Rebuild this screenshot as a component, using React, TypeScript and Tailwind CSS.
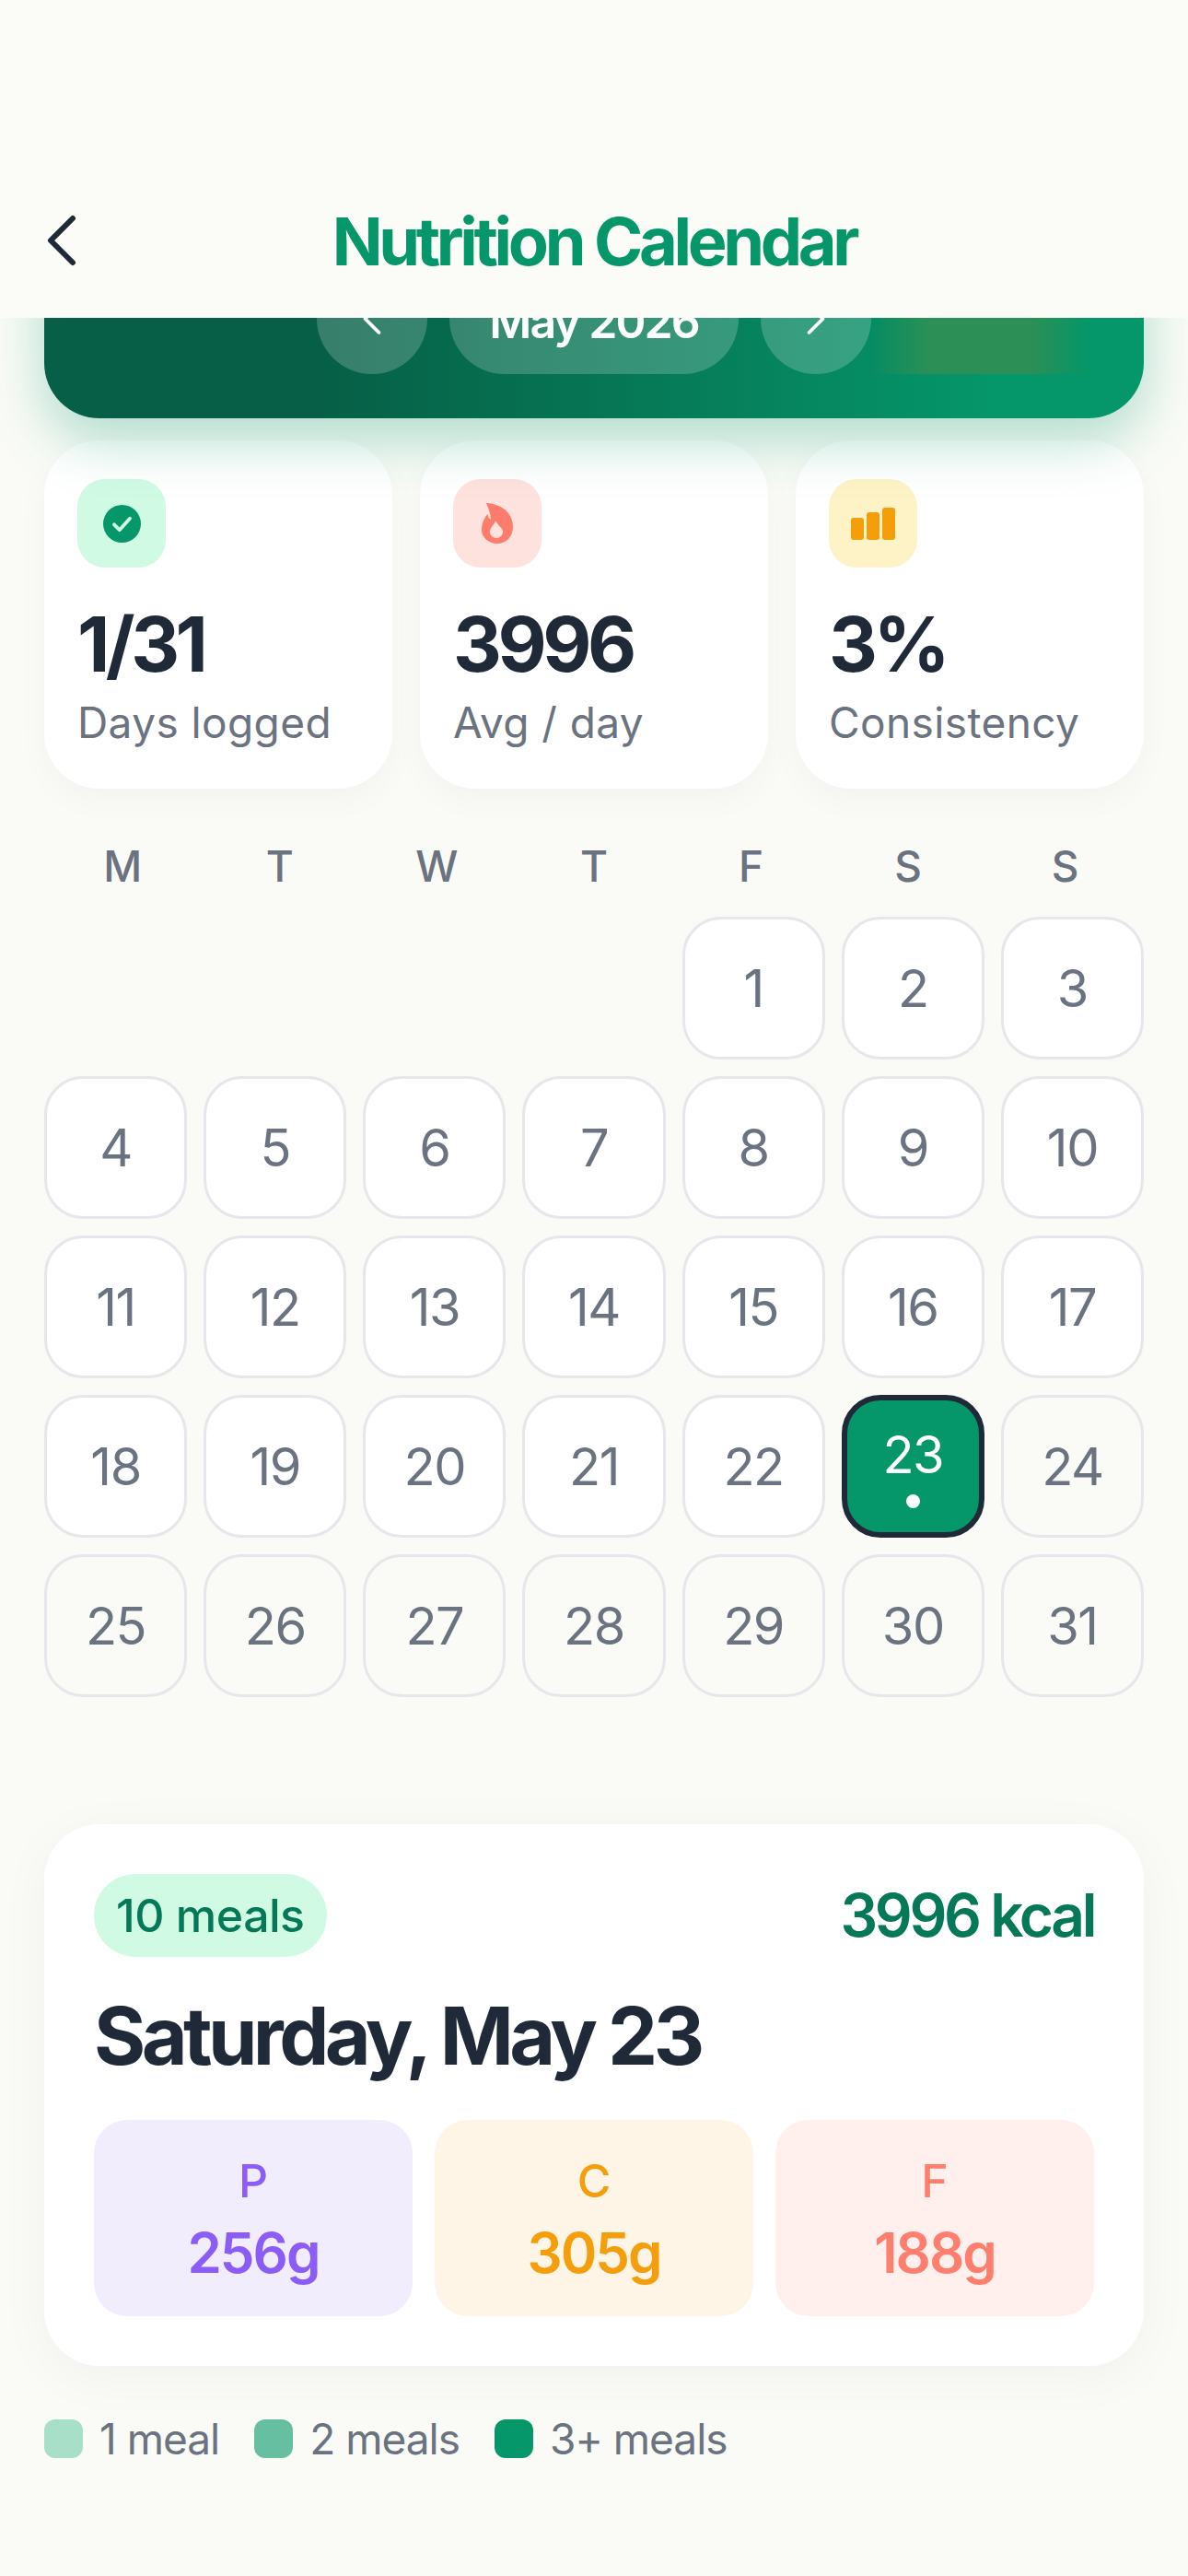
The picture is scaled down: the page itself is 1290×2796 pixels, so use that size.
import { ChevronLeft, ChevronRight } from "lucide-react";

const weekdays = ["M", "T", "W", "T", "F", "S", "S"];
const daysInMonth = Array.from({ length: 31 }, (_, i) => i + 1);
const selectedDay = 23;

const stats = [
  { value: "1/31", label: "Days logged", icon: "check", box: "bg-[#d1fae5]" },
  { value: "3996", label: "Avg / day", icon: "flame", box: "bg-[#fee2de]" },
  { value: "3%", label: "Consistency", icon: "bars", box: "bg-[#fef3c7]" },
];

const macros = [
  { letter: "P", amount: "256g", box: "bg-[#f1edfd]", text: "text-[#8b5cf6]" },
  { letter: "C", amount: "305g", box: "bg-[#fef5e7]", text: "text-[#f59e0b]" },
  { letter: "F", amount: "188g", box: "bg-[#fff0ee]", text: "text-[#ff7f6e]" },
];

const legend = [
  { label: "1 meal", swatch: "bg-[#a7dfc9]" },
  { label: "2 meals", swatch: "bg-[#66bfa0]" },
  { label: "3+ meals", swatch: "bg-[#059669]" },
];

function StatIcon({ name }: { name: string }) {
  if (name === "check") {
    return (
      <svg width="41" height="41" viewBox="0 0 24 24">
        <circle cx="12" cy="12" r="12" fill="#059669" />
        <path d="M7 12.5l3.4 3.4L17 8.6" fill="none" stroke="#d1fae5" strokeWidth="2.2" strokeLinecap="round" strokeLinejoin="round" />
      </svg>
    );
  }
  if (name === "flame") {
    return (
      <svg width="34" height="44" viewBox="0 0 34 44">
        <path
          fillRule="evenodd"
          d="M5 0C14 0 34 6 34 26C34 37 26 44 17 44C7 44 0 37 0 29C0 22 3 16 6.5 12C7 15 8 17 10 18C10 12 7 5 5 0ZM15 19C14 24 9 26 9 31C9 35 12 38 16 38C20 38 23 35 23 31C23 27 18 25 15 19Z"
          fill="#ff7b6b"
        />
      </svg>
    );
  }
  return (
    <div className="flex items-end gap-[3px]">
      <div className="w-[14px] h-[24px] rounded-[3px] bg-[#f59e0b]" />
      <div className="w-[14px] h-[30px] rounded-[3px] bg-[#f59e0b]" />
      <div className="w-[14px] h-[35px] rounded-[3px] bg-[#f59e0b]" />
    </div>
  );
}

function DayCell({ day }: { day: number }) {
  if (day === selectedDay) {
    return (
      <div className="h-[155px] rounded-[42px] border-[6px] border-[#1f2937] bg-[#059669] flex flex-col items-center justify-center text-white text-[56px] leading-[64px] tracking-[-1.5px]">
        <span>{day}</span>
        <div className="w-[15px] h-[15px] rounded-full bg-white mt-[11px]" />
      </div>
    );
  }

  return (
    <div
      className={`h-[155px] rounded-[42px] border-[3px] border-[#e5e7eb] flex items-center justify-center text-[#6b7280] text-[56px] tracking-[-1.5px] ${
        day < selectedDay ? "bg-white" : "bg-[#fafbf7]"
      }`}
    >
      {day}
    </div>
  );
}

export default function App() {
  return (
    <div className="w-[1290px] h-[2796px] overflow-hidden bg-[#fafbf7] font-['Inter',sans-serif]">
      {/* Header sits over the scrolled content */}
      <header className="relative z-20 h-[345px] bg-[#fbfcf8] px-[48px] pt-[215px]">
        <div className="relative flex items-center justify-center h-[90px]">
          <ChevronLeft className="absolute left-[-29px] top-[-2px] text-[#1f2937]" size={96} strokeWidth={1.5} />
          <h1 className="mt-[4px] text-[72px] font-bold tracking-[-4.3px] text-[#059669]">Nutrition Calendar</h1>
        </div>
      </header>

      <main className="px-[48px]">
        {/* Month card, mostly scrolled under the header */}
        <section className="relative z-10 h-[400px] -mt-[291px] rounded-[60px] bg-gradient-to-r from-[#065f46] from-25% to-[#059669] to-86% shadow-[0_24px_60px_rgba(5,150,105,0.3)] flex items-end justify-center gap-[24px] pb-[48px] text-white">
          <div className="w-[120px] h-[120px] rounded-full bg-white/20 flex items-center justify-center">
            <ChevronLeft size={60} strokeWidth={1.5} />
          </div>
          <div className="w-[314px] h-[120px] pt-[6px] rounded-[60px] bg-white/20 flex items-center justify-center text-[50px] font-semibold tracking-[-2px]">
            May 2026
          </div>
          <div className="w-[120px] h-[120px] rounded-full bg-white/20 flex items-center justify-center">
            <ChevronRight size={60} strokeWidth={1.5} />
          </div>
          <div className="absolute right-[60px] bottom-[48px] w-[236px] h-[120px] bg-[linear-gradient(90deg,#2b8f5600,#2b8f56_27%,#2b8f56_74%,#2b8f5600)]" />
        </section>

        <section className="grid grid-cols-3 gap-[30px] mt-[24px]">
          {stats.map((stat) => (
            <div key={stat.label} className="h-[378px] rounded-[60px] bg-white px-[36px] pt-[42px] shadow-[0_12px_36px_rgba(0,0,0,0.03)]">
              <div className={`w-[96px] h-[96px] rounded-[30px] flex items-center justify-center ${stat.box}`}>
                <StatIcon name={stat.icon} />
              </div>
              <div className="mt-[36px] text-[82px] leading-[96px] font-bold tracking-[-4.5px] text-[#1f2937]">{stat.value}</div>
              <div className="mt-[6px] text-[46px] leading-[60px] tracking-[0.4px] text-[#6b7280]">{stat.label}</div>
            </div>
          ))}
        </section>

        <div className="grid grid-cols-7 mt-[50px] h-[60px] items-center text-center text-[#6b7280] text-[46px] font-medium">
          {weekdays.map((d, i) => (
            <span key={i}>{d}</span>
          ))}
        </div>

        <div className="grid grid-cols-7 gap-[18px] mt-[29px]">
          <div className="col-span-4" />
          {daysInMonth.map((day) => (
            <DayCell key={day} day={day} />
          ))}
        </div>

        <section className="mt-[138px] h-[588px] rounded-[60px] bg-white p-[54px] shadow-[0_12px_60px_rgba(0,0,0,0.04)]">
          <div className="flex items-center justify-between h-[90px]">
            <span className="h-[90px] px-[24px] rounded-full bg-[#d1fae5] flex items-center text-[50px] font-medium tracking-[-0.5px] text-[#047857]">
              10 meals
            </span>
            <span className="text-[64px] leading-[90px] font-semibold tracking-[-3.4px] text-[#047857]">3996 kcal</span>
          </div>
          <h2 className="mt-[32px] text-[86px] leading-[108px] font-bold tracking-[-4.6px] text-[#1f2937]">Saturday, May 23</h2>
          <div className="grid grid-cols-3 gap-[24px] mt-[37px]">
            {macros.map((m) => (
              <div key={m.letter} className={`h-[213px] pt-[8px] rounded-[36px] flex flex-col items-center justify-center ${m.box} ${m.text}`}>
                <span className="text-[50px] leading-[66px] font-medium">{m.letter}</span>
                <span className="text-[60px] leading-[90px] font-semibold tracking-[-2px]">{m.amount}</span>
              </div>
            ))}
          </div>
        </section>

        <div className="flex items-center gap-[38px] mt-[55px]">
          {legend.map((item) => (
            <div key={item.label} className="flex items-center gap-[18px]">
              <div className={`w-[42px] h-[42px] rounded-[12px] ${item.swatch}`} />
              <span className="text-[46px] leading-[48px] tracking-[-1px] text-[#6b7280]">{item.label}</span>
            </div>
          ))}
        </div>
      </main>
    </div>
  );
}
